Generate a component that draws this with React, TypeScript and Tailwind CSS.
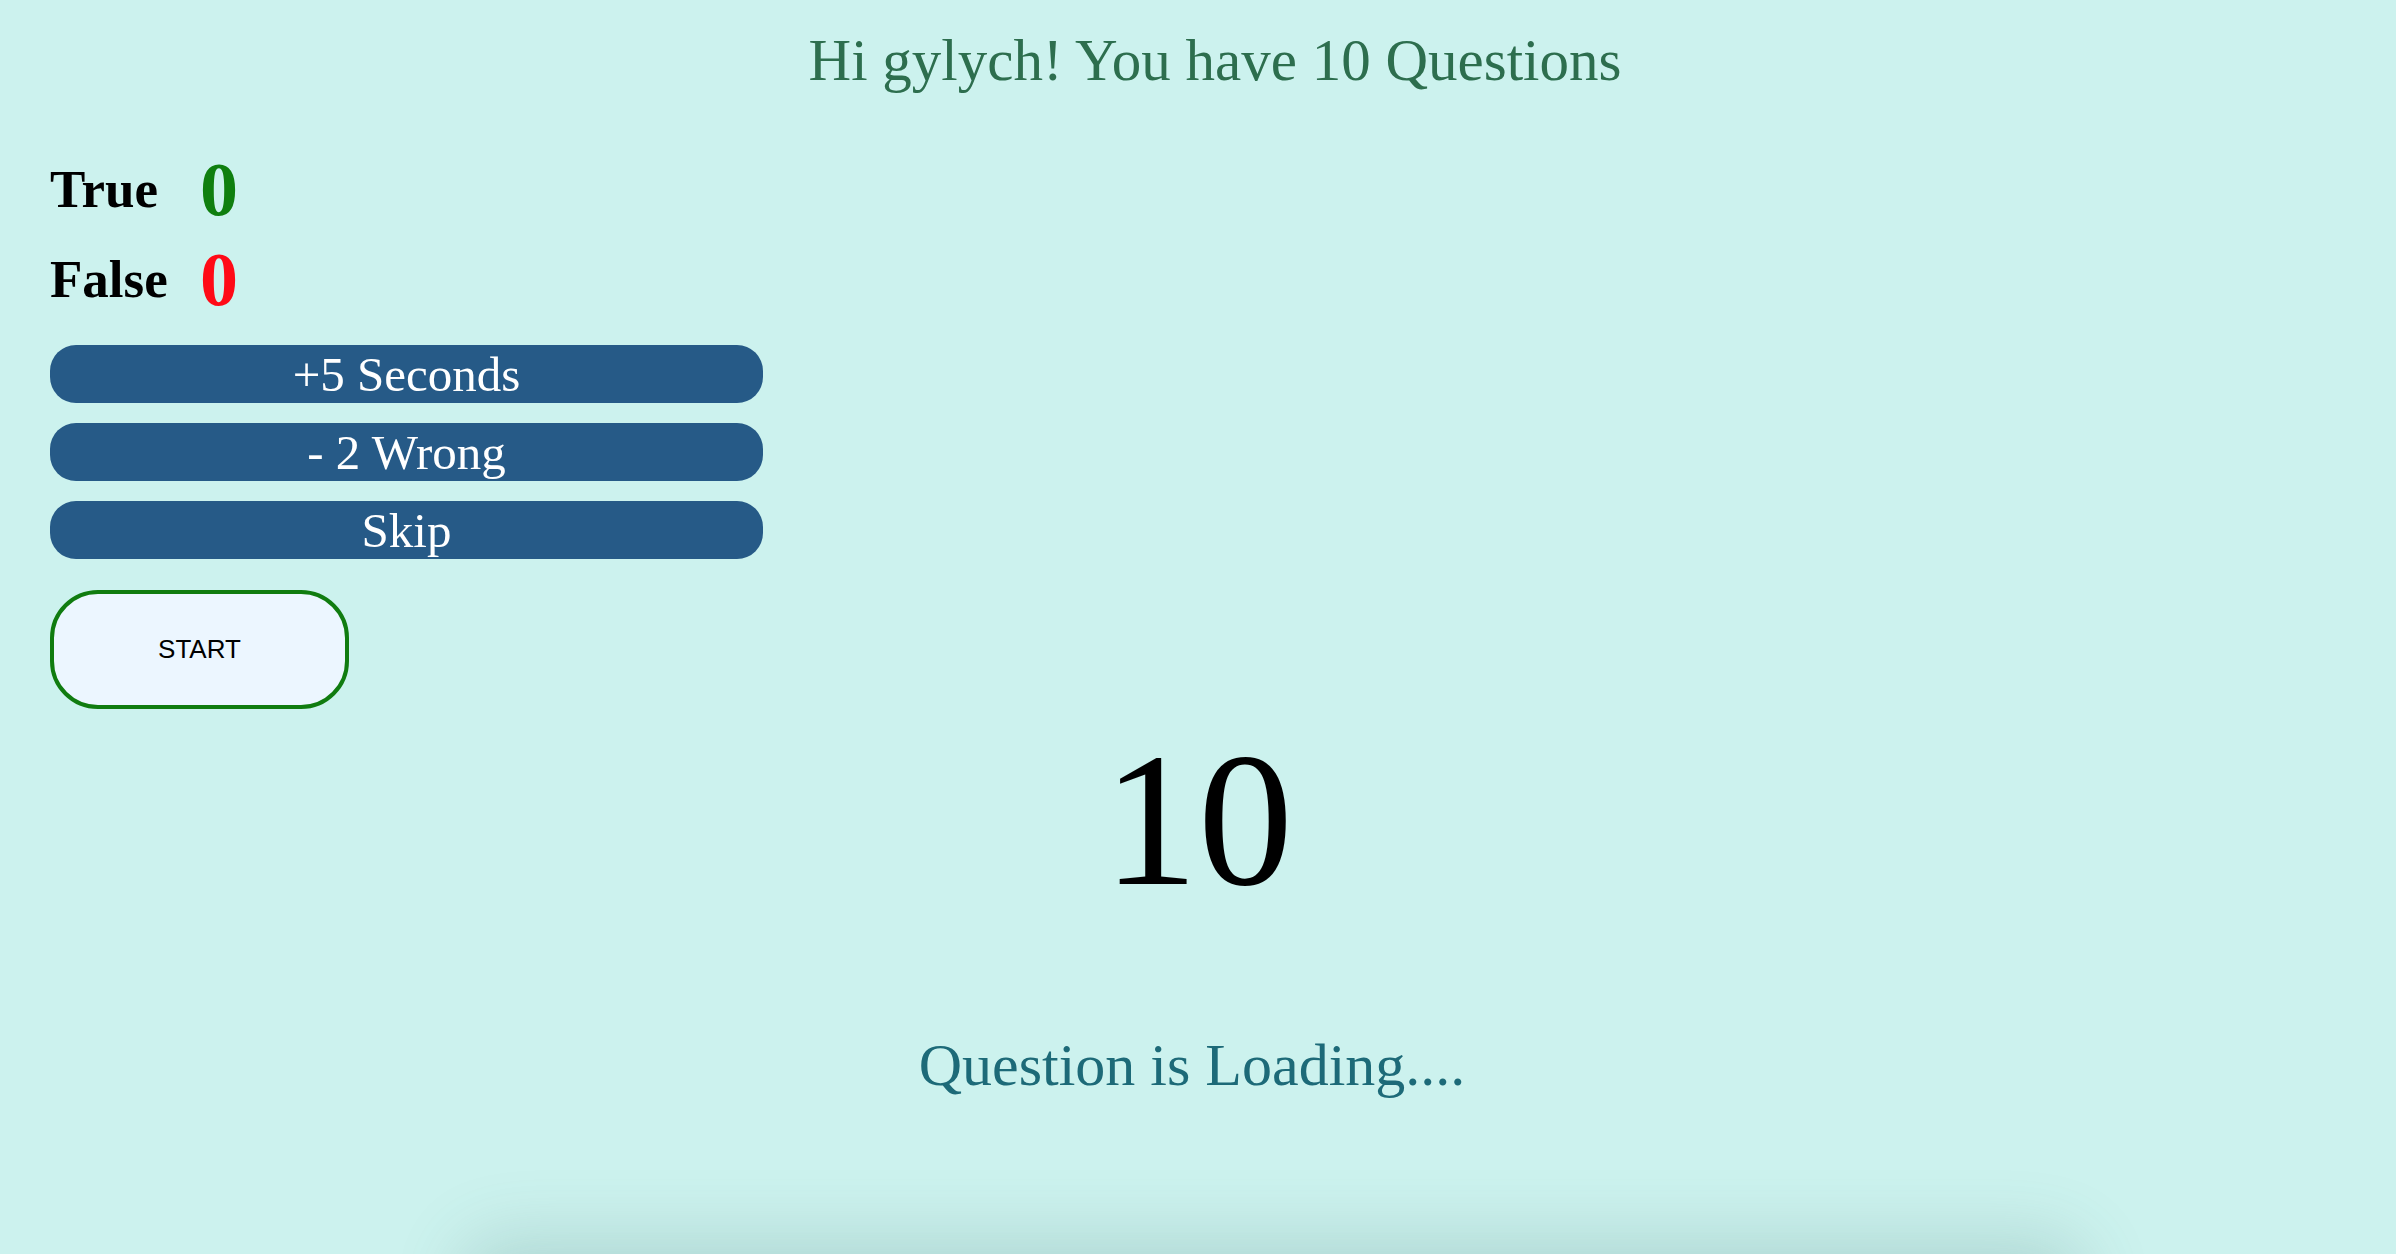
const serif = "font-['Liberation_Serif','Times_New_Roman',serif]";

const ScoreRow = ({ label, value, color }: { label: string; value: number; color: string }) => (
  <div className="flex items-center h-[76px]">
    <span className={`${serif} w-[150px] text-[53px] font-bold leading-none text-black`}>{label}</span>
    <span className={`${serif} text-[76px] font-bold leading-none ${color}`}>{value}</span>
  </div>
);

const HelpButton = ({ children }: { children: React.ReactNode }) => (
  <button
    className={`${serif} w-full h-[58px] rounded-[26px] bg-[#265a87] text-white text-[49px] leading-none flex items-center justify-center`}
  >
    {children}
  </button>
);

export default function App() {
  return (
    <div className="relative min-h-[1254px] w-full overflow-hidden bg-[#ccf2ee]">
      {/* header */}
      <h1
        className={`${serif} pt-[31px] pl-[34px] text-center text-[59px] leading-none font-normal text-[#2d6e4e]`}
      >
        Hi gylych! You have 10 Questions
      </h1>

      {/* left panel: score + jokers */}
      <div className="ml-[50px] mt-[61px] w-[713px]">
        <div className="flex flex-col gap-[14px]">
          <ScoreRow label="True" value={0} color="text-[#0f7f0f]" />
          <ScoreRow label="False" value={0} color="text-[#ff0a16]" />
        </div>

        <div className="mt-[28px] flex flex-col gap-[20px]">
          <HelpButton>+5 Seconds</HelpButton>
          <HelpButton>- 2 Wrong</HelpButton>
          <HelpButton>Skip</HelpButton>
        </div>

        <button className="mt-[31px] w-[299px] h-[119px] rounded-[48px] border-[4px] border-[#107c10] bg-[#ecf6ff] font-['Liberation_Sans',Arial,sans-serif] text-[26px] text-black flex items-center justify-center">
          START
        </button>
      </div>

      {/* timer */}
      <div className={`${serif} mt-[16px] text-center text-[190px] leading-none text-black`}>10</div>

      {/* question */}
      <p className={`${serif} mt-[120px] pr-[12px] text-center text-[60px] leading-none text-[#1d6a78]`}>
        Question is Loading....
      </p>

      {/* card below the fold, only its shadow shows */}
      <div className="absolute left-[480px] right-[330px] top-[1256px] h-[300px] rounded-[20px] bg-[#ccf2ee] shadow-[0_0_70px_18px_rgba(60,110,105,0.2)]" />
    </div>
  );
}
